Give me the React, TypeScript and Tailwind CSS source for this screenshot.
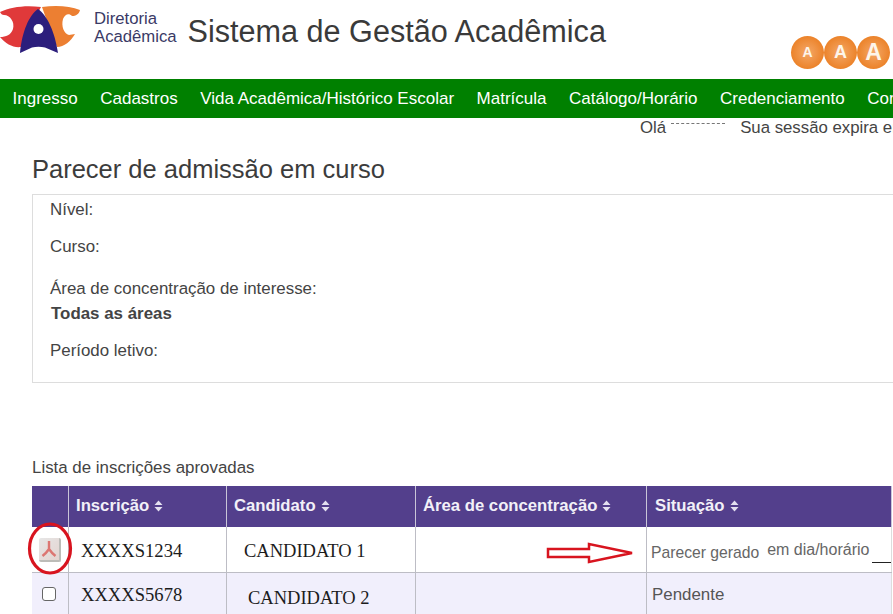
const navItems = [
  "Ingresso",
  "Cadastros",
  "Vida Acadêmica/Histórico Escolar",
  "Matrícula",
  "Catálogo/Horário",
  "Credenciamento",
  "Consultas",
];

const Logo = () => (
  <svg width="81" height="52" viewBox="0 0 81 52" className="shrink-0">
    <path d="M0 10 C11 5 25 3 41 5 L28 30 L21 45 C13 46 6 42 0 35 C6 35 11 33 13 27 C15 20 10 13 4 13 C2 13 1 12 0 10Z" fill="#e0393a" />
    <path d="M42 5 C56 3 70 4 80 8 C79 12 76 14 72 14 C69 11 65 12 63 17 C61 24 64 32 69 33 L75 32 C71 39 64 45 57 45 L48 22Z" fill="#ec7f32" />
    <path d="M38 7 C47 13 55 30 58 51 L45 45.5 C41 44.5 36 44.5 32 45.5 L20 51 C22 30 29 13 38 7Z" fill="#2c1e7c" />
    <circle cx="38.5" cy="27" r="5" fill="#ffffff" />
  </svg>
);

const FontCircle = ({ size, text }: { size: number; text: string }) => (
  <div
    className="flex h-[33px] w-[33px] shrink-0 items-center justify-center rounded-full bg-[radial-gradient(circle,#f4a868_0%,#ec842c_68%,#f0a060_100%)] font-['Liberation_Sans',sans-serif] font-bold text-[#fdf5ea]"
    style={{ fontSize: size }}
  >
    {text}
  </div>
);

const SortIcon = () => (
  <svg width="9" height="12" viewBox="0 0 9 12" className="ml-[5px] inline-block">
    <path d="M4.5 0.5 L8.5 5 H0.5Z M4.5 11.5 L0.5 7 H8.5Z" fill="#e4e0f0" />
  </svg>
);

const PdfIcon = () => (
  <div className="flex h-[24px] w-[22px] items-center justify-center rounded-[2px] border-b-2 border-r-2 border-[#bcbcb8] bg-[linear-gradient(135deg,#e6e6e6,#e4d4d0)]">
    <svg width="16" height="18" viewBox="0 0 16 18" fill="none" stroke="#dc7672" strokeWidth="2.4">
      <path d="M8 1 V9 C6 12 4 14 1.5 16 M8 9 C10 12 12 14 14.5 16" />
    </svg>
  </div>
);

const HeaderCell = ({ label, className }: { label: string; className: string }) => (
  <div className={`flex items-center border-r border-[#c9c5d8] pb-[2px] text-[16.7px] font-bold text-[#f2f0f8] ${className}`}>
    {label}
    <SortIcon />
  </div>
);

export default function App() {
  return (
    <div className="relative h-[614px] w-[893px] overflow-hidden bg-white font-['Liberation_Sans',Arial,sans-serif] text-[#333333]">
      {/* topo */}
      <header className="flex h-[79px] items-start">
        <div className="pt-[2px]">
          <Logo />
        </div>
        <div className="ml-[13px] pt-[10px] text-[16.7px] leading-[18px] text-[#3a3a66]">
          <div>Diretoria</div>
          <div>Acadêmica</div>
        </div>
        <h1 className="ml-[11px] pt-[13px] text-[30.6px] leading-[36px] whitespace-nowrap text-[#3a3a3a]">
          Sistema de Gestão Acadêmica
        </h1>
        <div className="ml-auto flex pt-[36px] pr-[3px]">
          <FontCircle size={14} text="A" />
          <FontCircle size={18} text="A" />
          <FontCircle size={23} text="A" />
        </div>
      </header>

      <nav className="flex h-[39px] items-center gap-[22.5px] overflow-hidden bg-[#008000] pl-[12.5px] text-[17px] whitespace-nowrap text-white">
        {navItems.map((item) => (
          <span key={item}>{item}</span>
        ))}
      </nav>

      <div className="flex h-[20px] items-center pl-[640px] text-[16.8px] whitespace-nowrap text-[#444444]">
        <span>Olá</span>
        <span className="mb-[9px] ml-[5px] w-[54px] shrink-0 border-t border-dashed border-[#777777]" />
        <span className="ml-[15px] shrink-0">Sua sessão expira em</span>
      </div>

      <main className="pl-[32px]">
        <h2 className="pt-[15px] text-[25.5px] leading-[32px] text-[#3c3c3c]">Parecer de admissão em curso</h2>

        <section className="mt-[9px] h-[189px] w-[900px] border border-[#dddddd] pl-[17px] text-[16.9px] text-[#444444]">
          <div className="pt-[5px] leading-[20px]">Nível:</div>
          <div className="pt-[17px] leading-[20px]">Curso:</div>
          <div className="pt-[22px] leading-[20px]">Área de concentração de interesse:</div>
          <div className="pt-[5px] pl-px leading-[20px] font-bold">Todas as áreas</div>
          <div className="pt-[17px] leading-[20px]">Período letivo:</div>
        </section>

        <p className="pt-[75px] text-[16.9px] leading-[20px] text-[#444444]">Lista de inscrições aprovadas</p>

        <div className="mt-[8px] w-[860px]">
          <div className="flex h-[41px] bg-[#533f8c]">
            <div className="w-[37px] shrink-0 border-r border-[#c9c5d8]" />
            <HeaderCell label="Inscrição" className="w-[158px] pl-[7px]" />
            <HeaderCell label="Candidato" className="w-[189px] pl-[7px]" />
            <HeaderCell label="Área de concentração" className="w-[231px] pl-[7px]" />
            <HeaderCell label="Situação" className="w-[245px] pl-[8px]" />
          </div>

          <div className="flex h-[46px] border-b border-[#bdbdc5] bg-white">
            <div className="flex w-[37px] shrink-0 items-center justify-center border-r border-[#bdbdc5] pr-[1px]">
              <PdfIcon />
            </div>
            <div className="flex w-[158px] items-center border-r border-[#bdbdc5] pt-[2px] pl-[12px] font-['Liberation_Serif',serif] text-[18.6px] text-[#1c1c1c]">
              XXXXS1234
            </div>
            <div className="flex w-[189px] items-center border-r border-[#bdbdc5] pt-[5px] pl-[17px] font-['Liberation_Serif',serif] text-[18.5px] text-[#1c1c1c]">
              CANDIDATO 1
            </div>
            <div className="w-[231px] border-r border-[#bdbdc5]" />
            <div className="flex w-[245px] items-center overflow-hidden border-r border-[#dddddd] pl-[4px] whitespace-nowrap text-[#666666]">
              <span className="pt-[6px] text-[15.7px]">Parecer gerado</span>
              <span className="ml-[8px] text-[16px]">em dia/horário</span>
              <span className="mt-[26px] ml-[3px] w-[20px] border-t border-[#222222]" />
            </div>
          </div>

          <div className="flex h-[41px] bg-[#f1effc]">
            <div className="flex w-[37px] shrink-0 items-center justify-center border-r border-[#bdbdc5] pr-[2px]">
              <input type="checkbox" readOnly className="h-[14px] w-[14px] appearance-none rounded-[3px] border border-[#666666] bg-white" />
            </div>
            <div className="flex w-[158px] items-center border-r border-[#bdbdc5] pt-[3px] pl-[12px] font-['Liberation_Serif',serif] text-[18.6px] text-[#1c1c1c]">
              XXXXS5678
            </div>
            <div className="flex w-[189px] items-center border-r border-[#bdbdc5] pt-[10px] pl-[21px] font-['Liberation_Serif',serif] text-[18.5px] text-[#1c1c1c]">
              CANDIDATO 2
            </div>
            <div className="w-[231px] border-r border-[#bdbdc5]" />
            <div className="flex w-[245px] items-center border-r border-[#dddddd] pt-[2px] pl-[5px] text-[16.9px] text-[#555555]">
              Pendente
            </div>
          </div>
        </div>
      </main>

      {/* marcações em vermelho por cima da tabela */}
      <svg width="893" height="614" viewBox="0 0 893 614" className="pointer-events-none absolute top-0 left-0" fill="none" stroke="#d8141f">
        <ellipse cx="50" cy="548.5" rx="20.5" ry="24.5" strokeWidth="3.2" />
        <path d="M548 549 H589 V544 L632 553 L589 562 V557 H548Z" strokeWidth="2.5" />
      </svg>
    </div>
  );
}
